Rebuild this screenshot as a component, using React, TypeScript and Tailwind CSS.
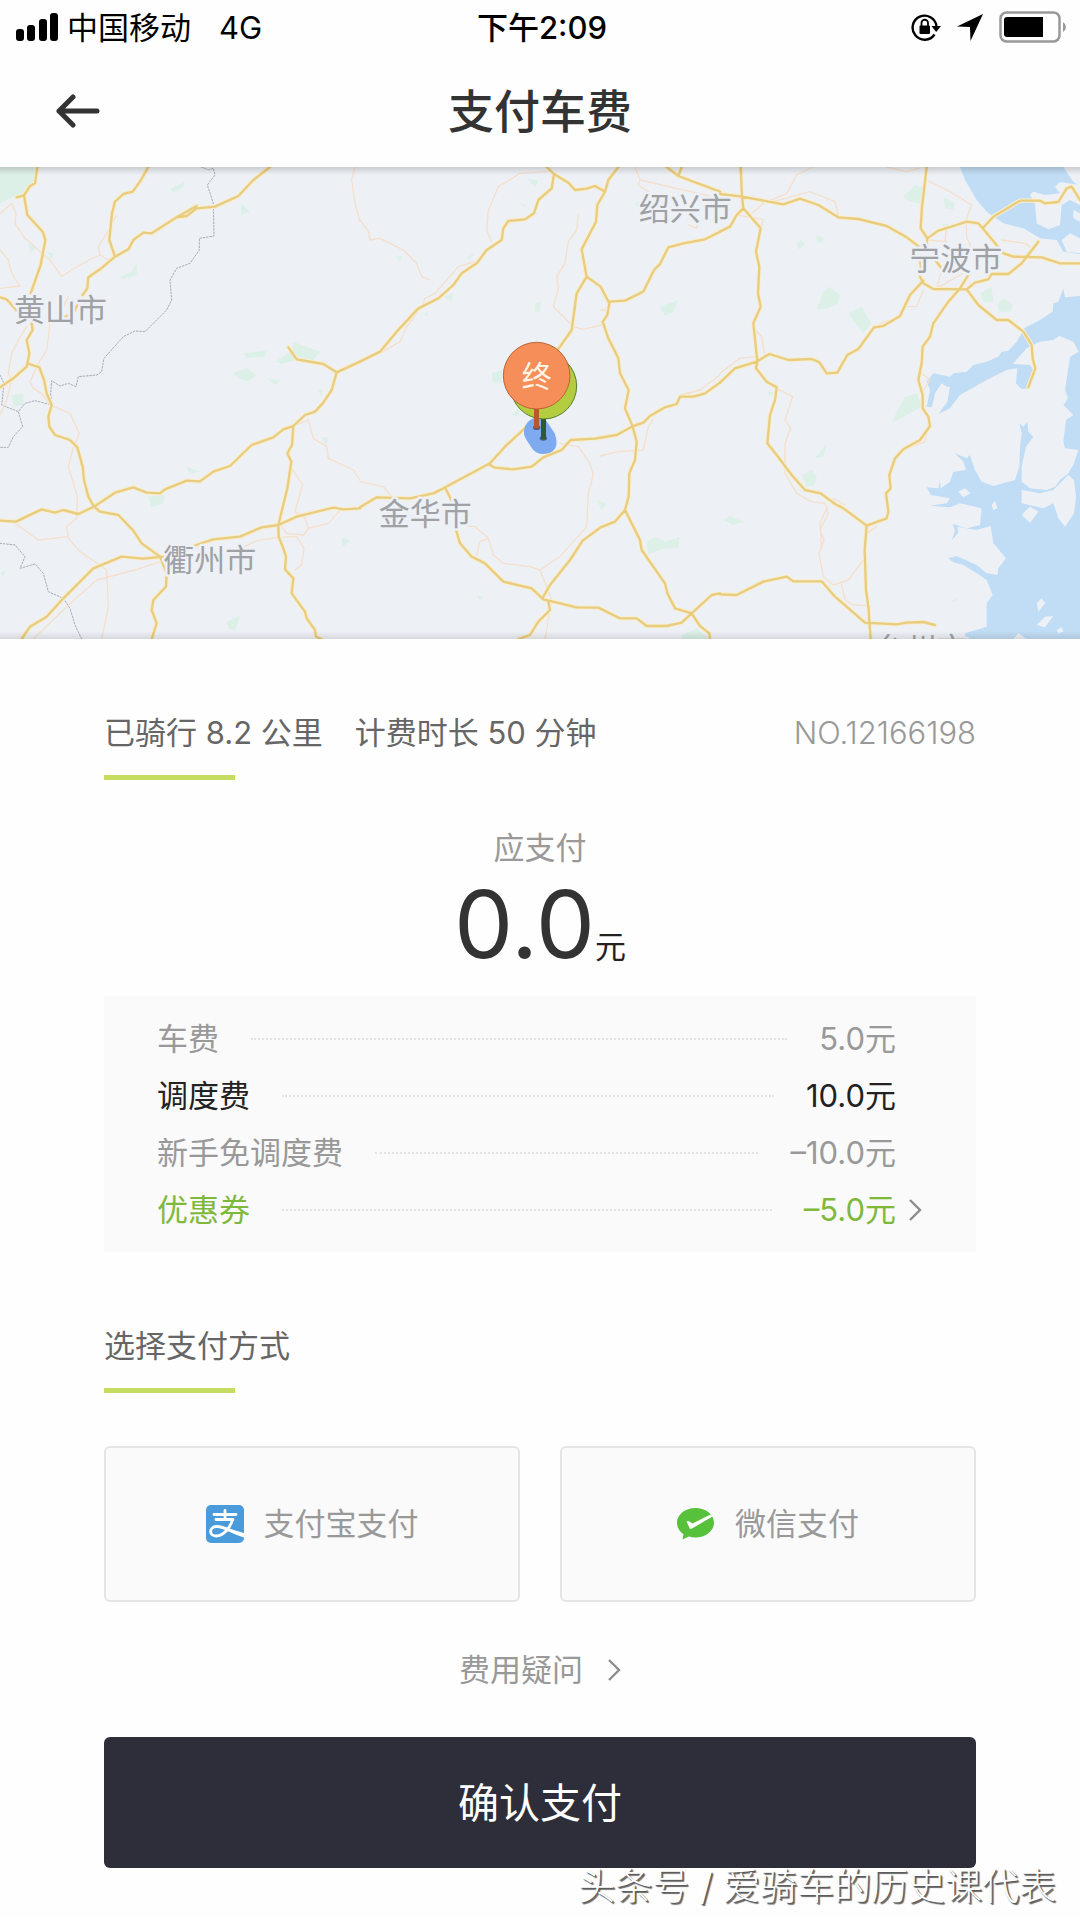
import React, { useState } from "react";

const LABELS = [
  { name: "黄山市", x: 42, y: 482 },
  { name: "衢州市", x: 490, y: 1232 },
  { name: "金华市", x: 1136, y: 1096 },
  { name: "绍兴市", x: 1916, y: 180 },
  { name: "宁波市", x: 2728, y: 330 },
  { name: "台州市", x: 2624, y: 1500 },
];

// main roads, one sheet per third of the map
const ROADS_WEST =
  "M112 21L105 70L90 78L72 106L82 165L128 215L136 240L122 315L92 400M50 112L72 106M0 412L20 418L50 452M95 490L98 510L80 540L88 580L80 620L40 655L0 682M88 612L118 622L132 660L140 700L155 735L145 770L148 800L165 825L210 840L232 862L248 920L252 960L265 1010L282 1040" +
  "M445 21L420 65L398 95L370 102L345 125L336 160L328 240L345 290M810 21L760 60L715 108L645 140L590 145L560 168L530 172L455 220L430 218L400 240L385 268L345 290L300 328L265 352L262 385L248 405M235 430L222 455L190 475M530 172L590 138" +
  "M0 1082L48 1085L125 1048L165 1058L190 1050L235 1062L282 1040L345 998L400 982L440 998L480 1000L495 988L560 962L600 964L640 935L690 918L755 855L820 832L850 808L880 798L915 765L945 755L970 728L995 690L1010 637L970 612L890 598L865 562M1010 637L1080 605" +
  "M282 1040L300 1055L355 1065L400 1112L425 1150L480 1190L500 1240L498 1280L460 1320L455 1350L470 1390L455 1437M490 1190L430 1196L365 1190L280 1225L190 1315L140 1370L90 1400L65 1437" +
  "M580 1158L640 1138L720 1130L785 1102L835 1095L890 1070L1000 1043L1030 1048L1080 1045M880 798L876 855L862 880L874 905L862 985L835 1095L836 1130L850 1165L858 1190L855 1228L880 1255L875 1300L915 1355L920 1375L945 1410L948 1430L965 1437";

const ROADS_MID =
  "M0 605L60 575L110 515L175 445L235 415L280 375L305 340L350 310L380 270L425 240L430 205L445 183L495 178L522 160L535 120L575 85L582 42L560 21M582 42L625 68L645 90L680 86L705 78L735 95M775 21L745 60L735 95L712 135L708 185L665 268L680 350L650 400L635 510L600 560L530 650M680 350L722 380L748 430L742 465L728 485L745 535L775 595L780 640L806 690L795 745L818 800L830 845L825 900L808 940L806 1010L795 1050" +
  "M748 425L795 422L850 395L882 330L900 312L925 262L970 250L1035 238L1080 215M920 21L955 48L1080 95M965 21L955 48M500 800L435 860L390 910L250 985L220 1000L150 1015L50 1012L0 1042M385 912L405 923L460 928L515 920L550 892L605 870L632 840L705 836L770 825L815 800L850 788L870 768L915 742L950 732L960 710L1000 710L1035 700L1080 668" +
  "M256 985L274 1020M288 1110L300 1150L335 1190L375 1210L430 1265L515 1285L550 1318L600 1330L650 1342L715 1343L780 1375L830 1375L860 1398L920 1398L965 1388L995 1360L1055 1305L1080 1300M795 1050L765 1085L722 1102L668 1142L630 1200L570 1275L550 1310M565 1325L570 1350L535 1385L510 1425L475 1437M795 1050L840 1140L845 1170L915 1270L922 1300L945 1345L995 1360L1020 1398L1048 1420L1050 1437";

const ROADS_EAST =
  "M62 21L66 110L70 145L50 165L30 200L0 215M0 102L66 110L190 133L240 116L295 135L355 172L415 177L500 198L560 232L600 262M620 21L606 140L602 205L622 235L618 270M622 235L655 212L700 198L740 185L775 190L788 205L850 280L880 290L965 292L1020 310L1080 310M788 205L820 170L900 122L960 122L975 130L1015 126L1040 85L1055 80L1080 120" +
  "M70 145L122 205L108 275L118 320L114 400L122 440L100 490L112 605L108 625L140 665L170 682L165 720L150 765L142 850L170 885L215 945L255 990L302 1000L345 1032L370 1045L440 1097L500 1075L505 1055L498 1000L512 985L508 945L525 895L550 868L600 840L630 798L625 770L608 745L608 705L595 660L605 610L608 560L630 530L640 490L685 425L718 388L745 345" +
  "M0 668L45 625L110 605L148 582L205 600L275 597L298 607L320 640L352 638L382 585L415 567L462 502L490 498L540 468L570 405L610 362M600 350L610 370L640 387L740 388L765 368L805 358L815 342L865 342L905 310L955 245M740 388L775 435L830 480L865 480L910 515L935 555L938 595L946 625L925 682M600 300L605 335M645 300L665 325" +
  "M440 1097L434 1170L438 1290L445 1340L452 1437M0 1303L50 1305L130 1265L200 1250L220 1264L305 1264L345 1310L435 1388L530 1393L560 1388L610 1386L645 1395";

const LANES_WEST =
  "M0 162L35 130M35 130L48 160L45 190L75 235L110 265L150 300L185 350L215 330L270 298L300 285L330 303M300 285L295 260L325 210L350 165M0 270L25 300L35 340L60 378L0 385M80 500L55 540L35 580L25 640L35 660L20 720L0 765M150 490L140 570L115 610L90 665L100 685L125 700L150 735L210 760L238 820L218 870L205 920L232 1010L230 1075L200 1100L205 1135L240 1175L320 1230L325 1340L305 1437M0 1075L45 1090L115 1140L205 1130" +
  "M480 1205L405 1230L290 1260L200 1340L100 1437M1065 21L1055 60L1065 130L1080 185M880 798L925 780L940 835L980 860L985 895L1060 930L1080 960M875 925L908 975L885 1055L915 1075L925 1105L910 1125L860 1120L845 1100M925 1105L985 1090L1020 1052M700 1175L770 1142L835 1132L890 1130L912 1165L905 1215L885 1230M190 440L205 410";
const LANES_MID =
  "M0 180L25 215L30 240L60 235L130 270L170 310L185 350L210 360M560 35L480 40L415 80L385 150L380 210L395 245M60 580L120 545L140 500L185 440L195 415L225 400L295 320L345 305M655 165L650 210L625 245L615 310L590 350L595 385L580 440L640 500L670 508L735 492M825 21L840 60L1080 115M840 60L835 75L865 95M0 965L70 980L95 1010" +
  "M600 850L655 860L690 910L700 945L685 1000L680 1100L600 1190L540 1230L510 1220L430 1210L400 1185L385 1135L345 1100L325 1098M385 1135L360 1145L350 1185M540 1230L560 1280L575 1320L555 1437M720 888L775 875L850 870L865 800L880 780M960 705L1020 690L1080 645M985 195L1010 205L1015 185M720 450L745 450";
const LANES_EAST =
  "M280 21L230 45L200 100L130 130L95 160M160 125L270 95L345 125L355 165M500 21L560 35L600 24M620 60L690 95L755 135L738 180L740 230L752 260M680 200L675 245M50 165L130 178L120 215M0 640L60 595L110 590M105 510L125 530L135 590M170 685L218 710L195 780L212 805L195 850L195 940L230 1000L275 1025L315 1030L325 1060L300 1110L312 1140L297 1180L310 1250L340 1275L385 1260L430 1200L440 1120L470 1100" +
  "M322 1040L300 1090L305 1160M365 1275L375 1320L400 1335L440 1337M605 640L630 660L610 690M625 800L615 845L575 860M610 390L590 440L560 440M480 490L525 475M340 1015L375 1035M745 330L650 385L665 330M845 240L915 250L945 270M620 240L680 245";

const BORDER =
  "M605 21L625 30L640 25L645 45L622 75L640 130L642 228L598 235L598 270L570 310L530 325L510 360L515 420L500 450L435 515L405 513L370 530L312 595L305 635L290 645L235 650L228 680L205 670L180 678L155 662L152 700L155 735L105 722L75 730L55 755L68 800L40 830L25 862L0 862M0 645L12 670L5 735L55 755M0 1150L45 1155L75 1190L60 1225L105 1212L130 1240L145 1295L190 1315L210 1345L225 1395L245 1437";

const SEA =
  "M1080 408L1035 412L1030 385L1015 425L1000 430L998 455L960 480L915 503L890 545L865 572L845 575L835 590L800 605L760 615L740 635L700 640L690 650L640 640L620 665L630 690L620 740L635 742L645 705L660 680L690 680L682 725L655 762L690 745L720 705L800 660L860 630L892 625L888 670L905 688L930 685L947 640L930 615L878 612L920 565L960 545L1000 540L1018 528L1060 545L1076 575L1050 590L1045 625L1035 690L1045 715L1030 735L1060 765L1038 780L1030 845L1035 865L1075 870L1060 915L1045 940L1020 960L1005 980L980 990L930 985L905 965L905 920L918 860L940 830L925 815L922 785L910 800L898 790L905 820L900 860L898 920L885 960L820 978L785 965L765 930L750 885L740 895L705 880L730 905L738 930L700 935L690 965L662 985L660 960L655 985L620 982L632 1005L690 1015L680 1030L630 1037L690 1042L720 1030L785 1045L780 1095L740 1105L698 1092L705 1112L695 1140L715 1118L712 1100L770 1110L812 1098L820 1150L858 1195L835 1225L832 1245L800 1240L770 1215L710 1188L685 1195L700 1207L730 1215L770 1240L800 1260L818 1305L800 1330L800 1400L735 1420V1437H1080Z" +
  "M720 21L735 60L770 120L800 155L850 190L910 205L960 235L1010 240L1030 275L1080 282V80L1060 65L1030 21Z";

const ISLANDS =
  "M940 95L975 105L1020 100L1005 80L1020 66L1080 75V135L1050 120L1025 135L1020 195L985 208L950 190L945 130L930 105ZM1025 240L1050 220L1080 235V280L1040 275ZM1060 150L1080 160V185L1060 175ZM905 990L960 1000L1000 990L1045 945L1062 960L1068 1010L1062 1060L1035 1100L1015 1075L1000 1030L970 1045L905 1030ZM905 1065L930 1040L955 1055L930 1088ZM715 995L735 985L752 1000L730 1012ZM815 1035L825 1022L832 1045L820 1050ZM950 1330L965 1315L975 1330L955 1355ZM950 1395L975 1370L1000 1368L975 1402ZM1010 1410L1025 1402L1030 1415L1015 1420ZM880 1437L895 1420L920 1437ZM640 735L645 700L665 670L688 685L680 725L655 742ZM920 895L935 890L945 920L925 945L915 920Z";

const WOODS_WEST =
  "M0 21H112L98 78L72 100L40 112L0 130ZM510 88L555 65L550 82L520 98ZM725 130L750 155L722 165ZM360 350L395 335L412 305L410 345L370 357ZM445 1010L495 1005L490 1030L455 1042ZM730 580L800 572L795 590L740 595ZM880 545L960 575L940 600L875 590ZM825 605L870 575L890 600L845 612ZM700 640L740 625L770 645L745 665L715 655ZM800 655L845 660L825 675ZM35 705L70 700L70 735L40 740ZM85 250L110 265L90 280ZM140 275L160 280L155 300ZM955 690L970 685L965 712ZM965 835L985 830L980 860ZM680 1385L720 1368L705 1412L685 1405ZM1025 1130L1052 1142L1028 1160ZM0 1240L18 1230L10 1250ZM560 920L600 935L570 942Z";
const WOODS_MID =
  "M500 55L535 62L525 82ZM105 288L130 290L120 305ZM250 410L280 400L275 425ZM525 430L542 425L540 455L525 455ZM900 440L955 420L940 455L915 468ZM395 640L425 630L425 670L398 665ZM860 1145L885 1130L915 1145L960 1130L955 1165L915 1165L865 1182ZM710 1020L740 1030L725 1050ZM965 1425L1010 1405L1048 1437H965ZM825 130L860 110L845 160ZM475 130L500 135L495 142ZM318 292L345 280L330 298ZM350 1305L370 1310L360 1325ZM190 460L205 455L200 472ZM455 765L480 740L475 770Z";
const WOODS_EAST =
  "M548 110L585 75L612 85L605 130L570 125ZM670 110L705 130L700 148L675 145ZM310 395L330 380L360 405L355 430L325 445L290 450ZM385 460L425 440L455 490L430 520L405 490ZM780 400L815 380L820 425L790 425ZM830 435L850 415L880 435L870 455L840 455ZM555 710L590 700L605 740L570 760L515 790L530 755ZM285 895L320 850L310 890ZM245 945L275 930L290 950L285 975L260 980ZM10 1080L30 1068L70 1085L40 1095ZM1035 700L1055 690L1075 715L1045 730ZM290 225L312 235L305 250L290 245ZM230 250L245 240L255 255L235 268ZM140 695L162 695L150 712ZM690 1325L712 1312L705 1325ZM665 190L690 195L680 215Z";

function Roads({ className, width }: { className: string; width: number }) {
  return (
    <g className={className} strokeWidth={width}>
      <path d={ROADS_WEST} />
      <path d={ROADS_MID} transform="translate(1080)" />
      <path d={ROADS_EAST} transform="translate(2160)" />
    </g>
  );
}

function RideMap() {
  return (
    <div className="relative overflow-hidden bg-[#edf1f6]">
      <svg viewBox="0 21 3240 1416" className="block w-full h-auto" role="img" aria-label="骑行地图">
        <g className="fill-[#dcf0e8]">
          <path d={WOODS_WEST} />
          <path d={WOODS_MID} transform="translate(1080)" />
          <path d={WOODS_EAST} transform="translate(2160)" />
        </g>
        <g transform="translate(2160)">
          <path d={SEA} className="fill-[#c1ddf5]" />
          <path d={ISLANDS} className="fill-[#edf1f6]" />
        </g>
        <g fill="none" strokeLinejoin="round" strokeLinecap="round">
          <path d={BORDER} className="stroke-[#a9abb5]" strokeWidth="3" strokeDasharray="5 5" />
          <g className="stroke-[#f5dfcb]" strokeWidth="4">
            <path d={LANES_WEST} />
            <path d={LANES_MID} transform="translate(1080)" />
            <path d={LANES_EAST} transform="translate(2160)" />
          </g>
          <Roads className="stroke-[#f9edcb]" width={13} />
          <Roads className="stroke-[#e8cc80]" width={7} />
        </g>
        <g
          className="fill-[#a0a1a5] stroke-[#edf1f6]"
          fontSize="93"
          strokeWidth="14"
          strokeLinejoin="round"
          paintOrder="stroke"
        >
          {LABELS.map((l) => (
            <text key={l.name} x={l.x} y={l.y}>{l.name}</text>
          ))}
        </g>

        {/* start / end pins */}
        <g transform="translate(1080)">
          <path d="M492 812Q496 780 530 772Q552 774 560 784L584 820Q600 866 570 878Q536 890 518 868L498 838Q490 826 492 812Z" className="fill-[#7eaaf0]" />
          <ellipse cx="550" cy="835" rx="11" ry="7" className="fill-[#4b6372]" />
          <rect x="543" y="770" width="15" height="68" className="fill-[#2f5a2b]" />
          <circle cx="551" cy="678" r="99" className="fill-[#b4cc40] stroke-[#54802f]" strokeWidth="3" />
          <ellipse cx="530" cy="803" rx="11" ry="7" className="fill-[#5b5a70]" />
          <rect x="522" y="740" width="15" height="64" className="fill-[#b8592b]" />
          <circle cx="530" cy="647" r="100" className="fill-[#f58e58] stroke-[#b96537]" strokeWidth="3" />
          <text x="530" y="681" textAnchor="middle" fontSize="90" className="fill-[#fff5e6]">终</text>
        </g>
      </svg>
      <div className="absolute inset-x-0 top-0 h-2 bg-linear-to-b from-black/15 to-transparent" />
      <div className="absolute inset-x-0 bottom-0 h-2 bg-linear-to-t from-black/10 to-transparent" />
    </div>
  );
}

function StatusBar() {
  return (
    <div className="grid grid-cols-3 items-center h-[54px] pl-4 pr-3 text-[31px] leading-none text-black">
      <div className="flex items-center">
        <svg width="43" height="28" viewBox="0 0 43 28" aria-hidden="true">
          <rect x="0" y="16" width="8" height="12" rx="3" />
          <rect x="11" y="12" width="8" height="16" rx="3" />
          <rect x="23" y="6" width="8" height="22" rx="3" />
          <rect x="34" y="0" width="8" height="28" rx="3" />
        </svg>
        <span className="ml-2">中国移动</span>
        <span className="ml-7">4G</span>
      </div>
      <div className="text-center font-medium">下午2:09</div>
      <div className="flex items-center justify-end">
        <svg width="30" height="28" viewBox="0 0 30 28" aria-hidden="true">
          <path d="M23.5 21.5A12 12 0 1 1 25.5 13" fill="none" stroke="#000" strokeWidth="2.4" />
          <path d="M20.5 13H30L25.2 19Z" />
          <rect x="8.5" y="12.5" width="10.5" height="8.5" rx="1" />
          <path d="M10.5 13V10a3.2 3.2 0 0 1 6.5 0V13" fill="none" stroke="#000" strokeWidth="1.8" />
        </svg>
        <svg width="26" height="27" viewBox="0 0 26 27" className="ml-4" aria-hidden="true">
          <path d="M26 0L13.5 27L13 13L0 12.5Z" />
        </svg>
        <svg width="69" height="32" viewBox="0 0 69 32" className="ml-4" aria-hidden="true">
          <rect x="1.5" y="1.5" width="59" height="29" rx="6" fill="none" stroke="#999" strokeWidth="2.5" />
          <path d="M8 6H44V26H8A3 3 0 0 1 5 23V9A3 3 0 0 1 8 6Z" />
          <path d="M64 11Q67 13 67 16T64 21Z" fill="#999" />
        </svg>
      </div>
    </div>
  );
}

function Chevron() {
  return (
    <svg width="14" height="24" viewBox="0 0 14 24" fill="none" stroke="#8c8c8c" strokeWidth="2.4" aria-hidden="true">
      <path d="M2 2L12 12L2 22" />
    </svg>
  );
}

const FEES = [
  { label: "车费", amount: "5.0", color: "text-[#999]" },
  { label: "调度费", amount: "10.0", color: "text-[#222]" },
  { label: "新手免调度费", amount: "–10.0", color: "text-[#999]" },
  { label: "优惠券", amount: "–5.0", color: "text-[#7fb93c]", link: true },
];

function AlipayIcon() {
  return (
    <svg width="38" height="38" viewBox="0 0 38 38" aria-hidden="true">
      <rect width="38" height="38" rx="5" fill="#4a9bdc" />
      <g fill="none" stroke="#fff" strokeLinecap="round">
        <path d="M8 9.5H30M19 5.5V14M10 14.5H27" strokeWidth="2.8" />
        <path d="M26.5 14.5C24.5 22 18 31 10 31C3 31 2.5 22 10.5 21.5C18 21 25 27 37 30" strokeWidth="2.8" />
      </g>
      <path d="M22 23.5L38 28V32.5Q30 30 21 25.5Z" fill="#fff" />
    </svg>
  );
}

function WechatIcon() {
  return (
    <svg width="38" height="32" viewBox="0 0 38 32" aria-hidden="true">
      <path d="M18.5 0C8.3 0 0 6.6 0 14.8C0 19.5 2.5 23.5 6.5 26.2L5.5 31.5L12 28.6C14 29.2 16.2 29.5 18.5 29.5C28.7 29.5 37 23 37 14.8C37 6.6 28.7 0 18.5 0Z" fill="#57c13b" />
      <path d="M9.5 13.5L13 21L15 20.5L35.5 8.5L33.5 6.5L15.5 15.5L11.5 13Z" fill="#fff" />
    </svg>
  );
}

const METHODS = [
  { id: "alipay", name: "支付宝支付", icon: <AlipayIcon /> },
  { id: "wechat", name: "微信支付", icon: <WechatIcon /> },
];

export default function App() {
  const [method, setMethod] = useState("");

  return (
    <div className="w-full bg-[#fefefe] font-['Inter','Noto_Sans_CJK_SC',sans-serif]">
      <StatusBar />
      <header className="grid grid-cols-[1fr_auto_1fr] items-center h-[113px] px-14">
        <button type="button" aria-label="返回" className="w-12">
          <svg width="44" height="34" viewBox="0 0 44 34" fill="none" stroke="#333" strokeWidth="5" strokeLinecap="round" strokeLinejoin="round">
            <path d="M17 3L3 17L17 31M3 17H41" />
          </svg>
        </button>
        <h1 className="text-[46px] leading-none font-medium text-[#333]">支付车费</h1>
      </header>

      <RideMap />

      <main className="px-[104px] pt-[70px] text-[31px] leading-12">
        <div className="flex items-center justify-between whitespace-nowrap">
          <p className="text-[#666]">
            已骑行 8.2 公里<span className="ml-8">计费时长 50 分钟</span>
          </p>
          <p className="text-[#999] font-light">NO.12166198</p>
        </div>
        <div className="mt-[18px] w-[131px] h-[5px] bg-[#c5de62]" />

        <div className="mt-11 text-center text-[#999]">应支付</div>
        <p className="mt-2 flex items-baseline justify-center h-[88px] leading-[88px] text-[#333]">
          <span className="text-[94px]">0.0</span>
          <span className="text-[#222]">元</span>
        </p>

        <dl className="mt-7 pl-[53px] pr-8 py-[14px] bg-[#fafafa]">
          {FEES.map((fee) => (
            <div key={fee.label} className={`flex items-center h-[57px] ${fee.color}`}>
              <dt>{fee.label}</dt>
              <div className="flex-1 mx-8 border-t-2 border-dotted border-[#e2e2e2]" />
              <dd>{fee.amount}元</dd>
              <div className="w-12 pl-3 flex">
                {fee.link && (
                  <button type="button" aria-label="选择优惠券"><Chevron /></button>
                )}
              </div>
            </div>
          ))}
        </dl>

        <h2 className="mt-[70px] text-[#666]">选择支付方式</h2>
        <div className="mt-[18px] w-[131px] h-[5px] bg-[#c5de62]" />

        <div className="mt-[53px] grid grid-cols-2 gap-10">
          {METHODS.map((m) => (
            <button
              key={m.id}
              type="button"
              aria-pressed={method === m.id}
              onClick={() => setMethod(m.id)}
              className="flex items-center justify-center gap-5 h-[156px] rounded-md border-2 border-[#e5e5e5] bg-[#fafafa] text-[#999]"
            >
              {m.icon}
              <span>{m.name}</span>
            </button>
          ))}
        </div>

        <a href="#fee" className="mt-11 flex items-center justify-center gap-6 text-[#999]">
          费用疑问
          <Chevron />
        </a>

        <button type="button" className="mt-[43px] w-full h-[131px] rounded-md bg-[#2e2d3a] text-white text-[41px]">
          确认支付
        </button>
      </main>

      <footer className="pr-6 pb-3 text-right text-[37px] leading-[38px] font-light text-white [text-shadow:1px_1px_1px_#555,2px_2px_1px_#666]">
        头条号 / 爱骑车的历史课代表
      </footer>
    </div>
  );
}
